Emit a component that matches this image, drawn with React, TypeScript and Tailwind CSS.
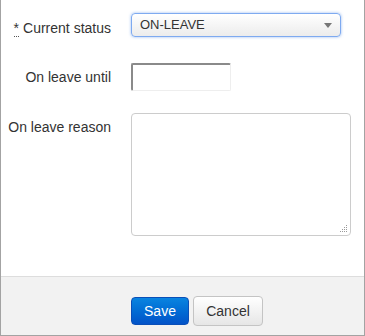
import React from 'react';

const FONT = { fontFamily: '"Liberation Sans", Arial, sans-serif' };

const ResizeGrip = () => (
  <svg width="10" height="10" viewBox="0 0 10 10" className="absolute bottom-[3px] right-[3px]">
    {[
      [8, 2],
      [6, 4],
      [8, 4],
      [4, 6],
      [6, 6],
      [8, 6],
      [2, 8],
      [4, 8],
      [6, 8],
      [8, 8],
    ].map(([x, y]) => (
      <rect key={`${x}-${y}`} x={x} y={y} width="1" height="1" fill="#9a9a9a" />
    ))}
  </svg>
);

const App = () => {
  return (
    <div
      className="flex h-[336px] w-[365px] flex-col border-x border-b border-[#a3a3a3] bg-white text-[14px] text-[#333]"
      style={FONT}
    >
      {/* Form body */}
      <div className="flex flex-1 flex-col pt-[13px]">
        <div className="flex h-[24px] items-center">
          <label className="mt-[5px] w-[110px] text-right leading-5">
            <abbr className="no-underline border-b border-dotted border-[#555] mr-[4px]" title="required">
              *
            </abbr>
            Current status
          </label>
          <div className="ml-[20px] flex h-[24px] w-[210px] items-center justify-between rounded-[4px] border border-[#7eaaf0] bg-gradient-to-b from-white to-[#ececec] pl-[8px] pr-[8px] text-[13px] shadow-[0_0_3px_rgba(82,140,230,0.6)]">
            <span>ON-LEAVE</span>
            <svg width="8" height="5" viewBox="0 0 8 5">
              <path d="M0 0 L8 0 L4 5 Z" fill="#777" />
            </svg>
          </div>
        </div>

        <div className="mt-[26px] flex h-[28px] items-center">
          <label className="w-[110px] text-right leading-5">On leave until</label>
          <input
            className="ml-[20px] h-[28px] w-[100px] rounded-[2px] border-l-2 border-t-2 border-r border-b border-l-[#8a8a8a] border-t-[#8a8a8a] border-r-[#eeeeee] border-b-[#eeeeee] bg-white px-1 outline-none"
            defaultValue=""
          />
        </div>

        <div className="mt-[22px] flex">
          <label className="w-[110px] pt-[4px] text-right leading-5">On leave reason</label>
          <div className="relative ml-[20px] h-[123px] w-[220px]">
            <textarea className="h-full w-full resize-none rounded-[4px] border border-[#cccccc] bg-white outline-none" />
            <ResizeGrip />
          </div>
        </div>
      </div>

      {/* Footer */}
      <div className="flex h-[59px] items-start gap-[4px] border-t border-[#dddddd] bg-[#f2f2f2] pl-[130px] pt-[19px]">
        <button className="mt-[1px] h-[28px] w-[58px] rounded-[4px] border border-[#0a4fb8] bg-gradient-to-b from-[#0a84e0] to-[#0453c8] text-[14px] text-white">
          Save
        </button>
        <button className="h-[30px] w-[70px] rounded-[4px] border border-[#c4c4c4] bg-gradient-to-b from-white to-[#e6e6e6] text-[14px] text-[#333]">
          Cancel
        </button>
      </div>
    </div>
  );
};

export default App;
